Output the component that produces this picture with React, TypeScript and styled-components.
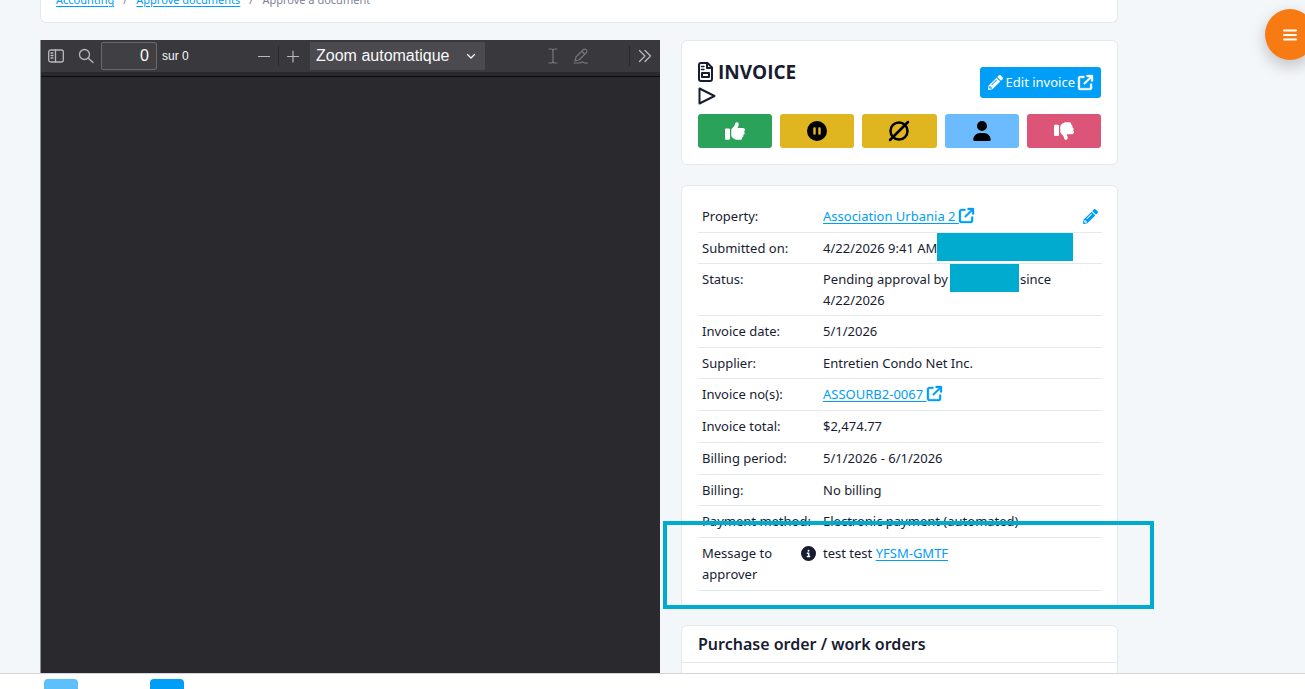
import React from "react";
import styled, { createGlobalStyle } from "styled-components";
import {
  FaArrowUpRightFromSquare,
  FaThumbsUp,
  FaThumbsDown,
  FaCirclePause,
  FaUser,
  FaCircleInfo,
} from "react-icons/fa6";
import { FaPencilAlt } from "react-icons/fa";

const GlobalStyle = createGlobalStyle`
  *, *::before, *::after { box-sizing: border-box; }
  html, body { margin: 0; }
  body {
    background: #f4f7fa;
    color: #181c32;
    font-family: "Segoe UI", "Noto Sans", sans-serif;
    font-size: 13px;
    line-height: 21px;
  }
`;

const line = "#e4e9ee";
const blue = "#009ef7";
const mark = "#00abd0";

const Page = styled.div`
  height: 100vh;
  display: flex;
  flex-direction: column;
  overflow: hidden;
`;

const Main = styled.main`
  flex: 1;
  min-height: 0;
  overflow: hidden;
  padding: 0 187px 0 40px;
  display: flex;
  flex-direction: column;
`;

const Breadcrumbs = styled.nav`
  flex: none;
  height: 23px;
  padding: 0 15px 12px;
  display: flex;
  align-items: flex-end;
  gap: 9px;
  overflow: hidden;
  background: #fff;
  border: 1px solid ${line};
  border-top: 0;
  border-radius: 0 0 6px 6px;
  color: #7e8299;
  font-size: 11px;
  line-height: 20px;
  white-space: nowrap;
`;

const Link = styled.a`
  color: ${blue};
  text-decoration: underline;
  text-underline-offset: 2px;
`;

const Columns = styled.div`
  flex: 1;
  min-height: 0;
  margin-top: 17px;
  display: grid;
  grid-template-columns: 620fr 437fr;
  gap: 21px;
`;

const Viewer = styled.section`
  background: #2a2a2e;
  border-left: 1px solid #8d9096;
  font-family: "Liberation Sans", Arial, sans-serif;
  min-width: 0;
`;

const Toolbar = styled.div`
  height: 32px;
  display: flex;
  align-items: center;
  background: #38383d;
  color: #f9f9fa;
`;

const ToolbarShade = styled.div`
  height: 5px;
  background: #2a2a2e;
  border-bottom: 1px solid #0c0c0d;
`;

const ToolButton = styled.button<{ $wide?: boolean }>`
  width: ${(p) => (p.$wide ? 30 : 28)}px;
  height: 28px;
  padding: 0;
  border: 0;
  background: none;
  color: #b9b9bc;
  display: grid;
  place-items: center;
  &:disabled { color: #77777b; }
`;

const PageInput = styled.input`
  width: 56px;
  height: 28px;
  padding: 0 7px;
  border: 1px solid #6a6a6e;
  border-radius: 2px;
  background: #404044;
  color: #f9f9fa;
  font: 16px "Liberation Sans", Arial, sans-serif;
  text-align: right;
`;

const PageCount = styled.span`
  margin-left: 5px;
  font-size: 12px;
`;

const Spacer = styled.div<{ $grow: number }>`
  flex: ${(p) => p.$grow};
`;

const Separator = styled.div`
  width: 1px;
  height: 20px;
  background: #2a2a2e;
`;

const ZoomBox = styled.div`
  position: relative;
  margin-left: 3px;
  color: #f9f9fa;
  svg {
    position: absolute;
    right: 8px;
    top: 8px;
    pointer-events: none;
  }
`;

const ZoomSelect = styled.select`
  display: block;
  width: 175px;
  height: 28px;
  padding: 0 6px 2px;
  appearance: none;
  border: 0;
  background: #4a4a4f;
  color: inherit;
  font: 16px "Liberation Sans", Arial, sans-serif;
`;

const Side = styled.div`
  display: flex;
  flex-direction: column;
  min-width: 0;
`;

const Card = styled.section`
  flex: none;
  background: #fff;
  border: 1px solid ${line};
  border-radius: 6px;
`;

const SummaryCard = styled(Card)`
  padding: 19px 16px 16px;
`;

const SummaryHead = styled.div`
  display: flex;
  justify-content: space-between;
  align-items: flex-start;
  height: 48px;
`;

const Title = styled.h1`
  margin: 0;
  font-family: "Segoe UI", "Open Sans", sans-serif;
  font-size: 19px;
  line-height: 24px;
  font-weight: 700;
  svg { display: block; }
`;

const TitleLine = styled.span`
  display: flex;
  align-items: center;
  gap: 5px;
  height: 24px;
`;

const EditButton = styled.button`
  height: 31px;
  display: flex;
  align-items: center;
  gap: 3px;
  padding: 0 8px;
  margin-top: 7px;
  border: 0;
  border-radius: 3px;
  background: ${blue};
  color: #fff;
  font: inherit;
`;

const Actions = styled.div`
  display: grid;
  grid-template-columns: repeat(5, 1fr);
  gap: 8px;
  margin-top: 6px;
`;

const ActionButton = styled.button<{ $bg: string; $fg: string }>`
  height: 34px;
  padding: 0;
  border: 0;
  border-radius: 3px;
  display: grid;
  place-items: center;
  background: ${(p) => p.$bg};
  color: ${(p) => p.$fg};
  font-size: 20px;
`;

const DetailsCard = styled(Card)`
  position: relative;
  margin-top: 20px;
  padding: 15px 15px 16px 16px;
`;

const Details = styled.table`
  width: 100%;
  border-collapse: collapse;
  table-layout: fixed;
`;

const Row = styled.tr<{ $tight?: boolean }>`
  th, td {
    padding: 5px 4px ${(p) => (p.$tight ? 4 : 5)}px;
    border-bottom: 1px solid ${line};
    vertical-align: top;
    text-align: left;
    font-weight: 400;
  }
  th { width: 121px; padding-right: 0; white-space: nowrap; }
`;

const Cell = styled.div`
  position: relative;
  display: flex;
  justify-content: space-between;
`;

const ExternalIcon = styled(FaArrowUpRightFromSquare)`
  width: 15px;
  height: 15px;
  vertical-align: -2px;
  overflow: visible;
  stroke-width: 12px;
`;

const IconButton = styled.button`
  height: 21px;
  padding: 0;
  border: 0;
  background: none;
  color: ${blue};
  font-size: 15px;
  line-height: 0;
`;

const WrapLabel = styled.span`
  display: flex;
  justify-content: space-between;
  white-space: normal;
  svg { flex: none; width: 15px; height: 15px; margin: 3px 3px 0 0; }
`;

const NameGap = styled.span`
  position: relative;
  display: inline-block;
  width: 72px;
`;

const Redaction = styled.span<{ $left: number; $width: number; $top: number }>`
  position: absolute;
  left: ${(p) => p.$left}px;
  top: ${(p) => p.$top}px;
  width: ${(p) => p.$width}px;
  height: 28px;
  background: ${mark};
`;

const Highlight = styled.div`
  position: absolute;
  left: -19px;
  right: -37px;
  bottom: -2px;
  height: 88px;
  border: 4px solid ${mark};
  pointer-events: none;
`;

const OrdersCard = styled(Card)`
  margin-top: 17px;
  height: 160px;
`;

const OrdersTitle = styled.h2`
  margin: 0;
  padding: 8px 16px;
  border-bottom: 1px solid ${line};
  font-size: 16px;
  line-height: 20px;
  font-weight: 600;
`;

const Footer = styled.footer`
  flex: none;
  height: 16px;
  padding: 5px 44px 0;
  display: flex;
  align-items: flex-start;
  gap: 72px;
  overflow: hidden;
  background: #fff;
  border-top: 1px solid #d3d5da;
`;

const FooterButton = styled.button<{ $muted?: boolean }>`
  flex: none;
  width: 34px;
  height: 34px;
  border: 0;
  border-radius: 4px;
  background: ${(p) => (p.$muted ? "#5dc0fa" : blue)};
`;

const MenuButton = styled.button`
  position: fixed;
  top: 9px;
  right: -10px;
  width: 50px;
  height: 51px;
  padding: 0;
  border: 0;
  border-radius: 50%;
  display: grid;
  place-items: center;
  background: #f77b12;
  color: #fff;
  box-shadow: 0 6px 16px rgba(0, 0, 0, 0.22);
`;

const stroke = {
  fill: "none",
  stroke: "currentColor",
  strokeLinecap: "round" as const,
  strokeLinejoin: "round" as const,
};

const FileIcon = () => (
  <svg width="15" height="20" viewBox="0 0 15 20" {...stroke} strokeWidth="2" aria-hidden>
    <path d="M3 1H9.5L14 5.5V17Q14 19 12 19H3Q1 19 1 17V3Q1 1 3 1Z" />
    <path d="M9 1.5V6H14" />
    <path d="M3.5 4.5H6M3.5 7.5H6" strokeWidth="1.5" />
    <rect x="4" y="11" width="7" height="4" strokeWidth="2" />
  </svg>
);

const PlayIcon = () => (
  <svg width="18" height="18" viewBox="0 0 18 18" {...stroke} strokeWidth="2" aria-hidden>
    <path d="M1.5 1.5V16.5L16.5 9Z" />
  </svg>
);

const EmptySetIcon = () => (
  <svg width="22" height="22" viewBox="0 0 22 22" {...stroke} strokeWidth="2.5" aria-hidden>
    <circle cx="11" cy="11" r="8.5" />
    <path d="M2 20L20 2" />
  </svg>
);

const rows: {
  label: React.ReactNode;
  value: React.ReactNode;
  tight?: boolean;
}[] = [
  {
    label: "Property:",
    value: (
      <Cell>
        <Link href="#property">
          Association Urbania 2 <ExternalIcon />
        </Link>
        <IconButton aria-label="Edit property"><FaPencilAlt /></IconButton>
      </Cell>
    ),
  },
  {
    label: "Submitted on:",
    tight: true,
    value: (
      <Cell>
        4/22/2026 9:41 AM
        <Redaction $left={114} $width={136} $top={-5} />
      </Cell>
    ),
  },
  {
    label: "Status:",
    tight: true,
    value: (
      <>
        Pending approval by<NameGap><Redaction $left={2} $width={69} $top={-20} /></NameGap>since
        4/22/2026
      </>
    ),
  },
  { label: "Invoice date:", value: "5/1/2026" },
  { label: "Supplier:", value: "Entretien Condo Net Inc.", tight: true },
  {
    label: "Invoice no(s):",
    value: (
      <Link href="#invoice">
        ASSOURB2-0067 <ExternalIcon />
      </Link>
    ),
  },
  { label: "Invoice total:", value: "$2,474.77" },
  { label: "Billing period:", value: "5/1/2026 - 6/1/2026" },
  { label: "Billing:", value: "No billing", tight: true },
  { label: "Payment method:", value: "Electronic payment (automated)" },
  {
    label: <WrapLabel>Message to approver<FaCircleInfo /></WrapLabel>,
    value: <>test test <Link href="#message">YFSM-GMTF</Link></>,
  },
];

export default function App() {
  return (
    <Page>
      <GlobalStyle />
      <Main>
        <Breadcrumbs aria-label="Breadcrumb">
          <Link href="#accounting">Accounting</Link>
          <span>/</span>
          <Link href="#approve">Approve documents</Link>
          <span>/</span>
          <span>Approve a document</span>
        </Breadcrumbs>
        <Columns>
          <Viewer aria-label="Document">
            <Toolbar>
              <ToolButton $wide aria-label="Sidebar">
                <svg width="16" height="14" viewBox="0 0 16 14" {...stroke} strokeWidth="1.3">
                  <rect x="0.7" y="1" width="14.6" height="12" rx="2" />
                  <path d="M7.5 1V13M3 4H5M3 6.5H5M3 9H5" />
                </svg>
              </ToolButton>
              <ToolButton $wide aria-label="Search">
                <svg width="16" height="16" viewBox="0 0 16 16" {...stroke} strokeWidth="1.3">
                  <circle cx="6.5" cy="6.5" r="5" />
                  <path d="M10.3 10.3L15 14.5" />
                </svg>
              </ToolButton>
              <PageInput aria-label="Page" defaultValue="0" />
              <PageCount>sur 0</PageCount>
              <Spacer $grow={60} />
              <ToolButton aria-label="Zoom out">
                <svg width="14" height="14" viewBox="0 0 14 14" {...stroke} strokeWidth="1.2">
                  <path d="M1.5 7.5H12.5" />
                </svg>
              </ToolButton>
              <Separator />
              <ToolButton aria-label="Zoom in">
                <svg width="14" height="14" viewBox="0 0 14 14" {...stroke} strokeWidth="1.2">
                  <path d="M1.5 7.5H12.5M7 2V13" />
                </svg>
              </ToolButton>
              <ZoomBox>
                <ZoomSelect aria-label="Zoom">
                  <option>Zoom automatique</option>
                </ZoomSelect>
                <svg width="12" height="12" viewBox="0 0 12 12" {...stroke} strokeWidth="1.3">
                  <path d="M2.5 4.5L6 8L9.5 4.5" />
                </svg>
              </ZoomBox>
              <Spacer $grow={53} />
              <ToolButton aria-label="Text" disabled>
                <svg width="12" height="16" viewBox="0 0 12 16" {...stroke} strokeWidth="1.2">
                  <path d="M2 1H4Q6 1 6 3V13Q6 15 4 15H2M10 1H8Q6 1 6 3M10 15H8Q6 15 6 13" />
                </svg>
              </ToolButton>
              <ToolButton aria-label="Draw" disabled>
                <svg width="16" height="16" viewBox="0 0 16 16" {...stroke} strokeWidth="1.2">
                  <path d="M3 9L10.5 1.5Q12 0.5 13.3 1.8Q14.5 3.2 13.5 4.5L6 12L2 13ZM9 3.5L11.5 6" />
                  <path d="M1 15H7Q9 13.5 10.5 14.5Q12 15.5 14.5 15" />
                </svg>
              </ToolButton>
              <Spacer $grow={33} />
              <Separator />
              <ToolButton $wide aria-label="Tools">
                <svg width="14" height="14" viewBox="0 0 14 14" {...stroke} strokeWidth="1.3">
                  <path d="M1.5 1.5L7 7L1.5 12.5M7 1.5L12.5 7L7 12.5" />
                </svg>
              </ToolButton>
            </Toolbar>
            <ToolbarShade />
          </Viewer>
          <Side>
            <SummaryCard>
              <SummaryHead>
                <Title>
                  <TitleLine><FileIcon />INVOICE</TitleLine>
                  <TitleLine><PlayIcon /></TitleLine>
                </Title>
                <EditButton>
                  <FaPencilAlt size={15} />
                  Edit invoice
                  <ExternalIcon />
                </EditButton>
              </SummaryHead>
              <Actions>
                <ActionButton $bg="#2aa25a" $fg="#fff" aria-label="Approve"><FaThumbsUp /></ActionButton>
                <ActionButton $bg="#dfb520" $fg="#000" aria-label="Put on hold"><FaCirclePause /></ActionButton>
                <ActionButton $bg="#dfb520" $fg="#000" aria-label="Void"><EmptySetIcon /></ActionButton>
                <ActionButton $bg="#6cbbff" $fg="#000" aria-label="Assign"><FaUser /></ActionButton>
                <ActionButton $bg="#dc5578" $fg="#fff" aria-label="Reject"><FaThumbsDown /></ActionButton>
              </Actions>
            </SummaryCard>
            <DetailsCard>
              <Details>
                <tbody>
                  {rows.map((row, i) => (
                    <Row key={i} $tight={row.tight}>
                      <th scope="row">{row.label}</th>
                      <td>{row.value}</td>
                    </Row>
                  ))}
                </tbody>
              </Details>
              <Highlight />
            </DetailsCard>
            <OrdersCard>
              <OrdersTitle>Purchase order / work orders</OrdersTitle>
            </OrdersCard>
          </Side>
        </Columns>
      </Main>
      <Footer>
        <FooterButton $muted aria-label="Previous" />
        <FooterButton aria-label="Next" />
      </Footer>
      <MenuButton aria-label="Menu">
        <svg width="14" height="12" viewBox="0 0 14 12" {...stroke} strokeWidth="2">
          <path d="M1 1.5H13M1 6H13M1 10.5H13" />
        </svg>
      </MenuButton>
    </Page>
  );
}
